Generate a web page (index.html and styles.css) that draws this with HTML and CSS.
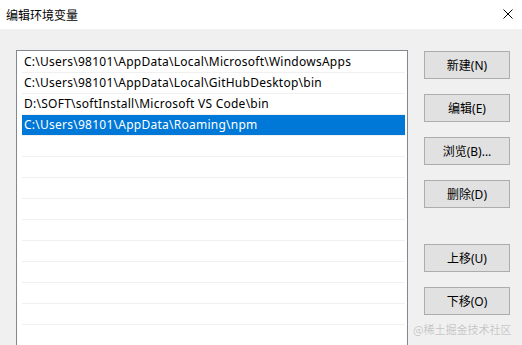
FILE: index.html
```html
<!DOCTYPE html>
<html lang="zh-CN">
<head>
<meta charset="utf-8">
<link rel="stylesheet" href="styles.css">
</head>
<body>
<div class="dialog">
  <div class="titlebar">
    <span class="title">编辑环境变量</span>
    <svg class="close" width="10" height="10" viewBox="0 0 10 10"><path d="M0.5 0.5L9.5 9.5M9.5 0.5L0.5 9.5" stroke="#000" stroke-width="1"/></svg>
  </div>
  <div class="content">
    <div class="listbox">
      <div class="row">C:\Users\98101\AppData\Local\Microsoft\WindowsApps</div>
      <div class="row">C:\Users\98101\AppData\Local\GitHubDesktop\bin</div>
      <div class="row">D:\SOFT\softInstall\Microsoft VS Code\bin</div>
      <div class="row selected">C:\Users\98101\AppData\Roaming\npm</div>
      <div class="row"></div>
      <div class="row"></div>
      <div class="row"></div>
      <div class="row"></div>
      <div class="row"></div>
      <div class="row"></div>
      <div class="row"></div>
      <div class="row"></div>
      <div class="row"></div>
      <div class="row"></div>
    </div>
    <div class="buttons">
      <button class="btn">新建(N)</button>
      <button class="btn">编辑(E)</button>
      <button class="btn">浏览(B)...</button>
      <button class="btn">删除(D)</button>
      <button class="btn spaced">上移(U)</button>
      <button class="btn">下移(O)</button>
    </div>
  </div>
  <div class="watermark">@稀土掘金技术社区</div>
</div>
</body>
</html>
```
FILE: styles.css
```css
html, body {
  margin: 0;
  padding: 0;
  width: 522px;
  height: 345px;
  overflow: hidden;
  background: #f0f0f0;
  font-family: "Noto Sans", "Noto Sans CJK SC", sans-serif;
  font-size: 12px;
  color: #000;
}
.dialog {
  position: relative;
  width: 522px;
  height: 345px;
  overflow: hidden;
}
.titlebar {
  height: 29px;
  background: #fff;
  display: flex;
  align-items: center;
  justify-content: space-between;
  padding: 0 9px 0 6px;
  box-sizing: border-box;
}
.title {
  font-family: "Noto Sans CJK SC", sans-serif;
  font-size: 12px;
  line-height: 1;
  color: #000;
}
.close {
  display: block;
  margin-bottom: 1px;
}
.content {
  display: flex;
  align-items: flex-start;
  padding: 21px 0 0 16px;
  gap: 16px;
}
.listbox {
  width: 392px;
  height: 320px;
  border: 1px solid #828790;
  border-bottom: none;
  box-sizing: border-box;
  background: #fff;
  padding: 1px 2px 0 5px;
  overflow: hidden;
}
.row {
  height: 20px;
  line-height: 20px;
  border-bottom: 1px solid #f0f0f0;
  padding-left: 2px;
  white-space: nowrap;
  font-size: 12px;
  letter-spacing: 0.25px;
}
.row.selected {
  background: #0078d7;
  color: #fff;
}
.buttons {
  display: flex;
  flex-direction: column;
  gap: 15px;
  padding-top: 1px;
}
.btn {
  width: 86px;
  height: 28px;
  margin: 0;
  padding: 0;
  background: #e1e1e1;
  border: 1px solid #adadad;
  font-family: "Noto Sans", "Noto Sans CJK SC", sans-serif;
  font-size: 12px;
  color: #000;
}
.btn.spaced {
  margin-top: 21px;
}
.watermark {
  position: absolute;
  left: 413px;
  top: 321px;
  font-family: "Noto Sans CJK SC", sans-serif;
  font-size: 11px;
  color: #c4c4c4;
  text-shadow: 0 0 1px #fff;
  letter-spacing: 0;
}
```
